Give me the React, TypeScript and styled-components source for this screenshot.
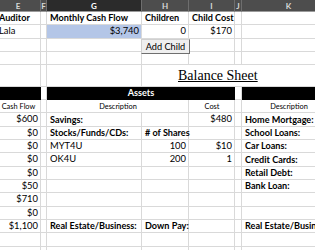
import React from "react";
import styled, { createGlobalStyle } from "styled-components";

const GlobalStyle = createGlobalStyle`
  html, body {
    margin: 0;
    padding: 0;
    background: #ffffff;
    overflow: hidden;
  }
  body {
    font-family: Lato, "Liberation Sans", sans-serif;
  }
`;

type Align = "left" | "right" | "center";

interface CellSpec {
  text?: string;
  bold?: boolean;
  align?: Align;
  small?: boolean;
  span?: number;
  fill?: string;
}

const Viewport = styled.div`
  width: 315px;
  height: 250px;
  overflow: hidden;
`;

const Sheet = styled.div`
  margin-left: -4px;
  width: 340px;
  display: grid;
  grid-template-columns: 45px 6px 95px 47px 46px 7px 94px;
  grid-template-rows: 12px repeat(4, 13.333px) 21.333px repeat(13, 13.333px);
`;

const HeaderCell = styled.div<{ $active?: boolean }>`
  background: ${(p) => (p.$active ? "#2b2b2b" : "#4d4d4d")};
  color: ${(p) => (p.$active ? "#ffffff" : "#d8d8d8")};
  border-right: 1px solid #6e6e6e;
  border-bottom: 1px solid #9a9a9a;
  box-sizing: border-box;
  font-size: 8px;
  font-weight: 700;
  display: flex;
  align-items: center;
  justify-content: center;
`;

const Cell = styled.div<{
  $bold?: boolean;
  $align?: Align;
  $small?: boolean;
  $span?: number;
  $fill?: string;
}>`
  position: relative;
  grid-column: span ${(p) => p.$span ?? 1};
  box-sizing: border-box;
  border-right: 1px solid ${(p) => (p.$fill === "#000000" ? "#000000" : "#d9d9d9")};
  border-bottom: 1px solid ${(p) => (p.$fill === "#000000" ? "#000000" : "#d9d9d9")};
  background: ${(p) => p.$fill ?? "#ffffff"};
  color: ${(p) => (p.$fill === "#000000" ? "#ffffff" : "#000000")};
  font-size: ${(p) => (p.$small ? "7.4px" : p.$bold ? "9.1px" : "9.4px")};
  font-weight: ${(p) => (p.$bold ? 700 : 400)};
  line-height: 1;
  white-space: nowrap;
  display: flex;
  align-items: flex-end;
  justify-content: ${(p) =>
    p.$align === "right" ? "flex-end" : p.$align === "center" ? "center" : "flex-start"};
  padding: 0 2px 2px 3px;
`;

const CellText = styled.span`
  position: relative;
  z-index: 1;
`;

const TitleCell = styled.div`
  grid-column: span 4;
  border-bottom: 1px solid #d9d9d9;
  display: flex;
  align-items: flex-end;
  padding: 0 0 2px 36px;
  font-family: "Liberation Serif", serif;
  font-size: 14px;
  text-decoration: underline;
  text-underline-offset: 1px;
  text-decoration-thickness: 1px;
  color: #000000;
`;

const FormButton = styled.button`
  position: absolute;
  top: 0;
  left: -1px;
  width: 49px;
  height: 15px;
  z-index: 2;
  margin: 0;
  padding: 0;
  box-sizing: border-box;
  background: #efefef;
  border: 1px solid #d0d0d0;
  border-right-color: #6f6f6f;
  border-bottom-color: #6f6f6f;
  font-family: Lato, "Liberation Sans", sans-serif;
  font-size: 9.2px;
  color: #000000;
  line-height: 1;
`;

const BLUE = "#b4c6e7";
const BLACK = "#000000";

const headers = ["E", "F", "G", "H", "I", "J", "K"];

const topRows: CellSpec[][] = [
  [
    { text: "Auditor", bold: true },
    {},
    { text: "Monthly Cash Flow", bold: true },
    { text: "Children", bold: true },
    { text: "Child Cost", bold: true },
    {},
    {},
  ],
  [
    { text: "Lala" },
    {},
    { text: "$3,740", align: "right", fill: BLUE },
    { text: "0", align: "right" },
    { text: "$170", align: "right" },
    {},
    {},
  ],
];

const blank: CellSpec[] = [{}, {}, {}, {}, {}, {}, {}];

const bottomRows: CellSpec[][] = [
  [
    { fill: BLACK },
    {},
    { text: "Assets", bold: true, align: "center", span: 3, fill: BLACK },
    {},
    { fill: BLACK },
  ],
  [
    { text: "Cash Flow", small: true, align: "center" },
    {},
    { text: "Description", small: true, align: "center", span: 2 },
    { text: "Cost", small: true, align: "center" },
    {},
    { text: "Description", small: true, align: "center" },
  ],
  [
    { text: "$600", align: "right" },
    {},
    { text: "Savings:", bold: true },
    {},
    { text: "$480", align: "right" },
    {},
    { text: "Home Mortgage:", bold: true },
  ],
  [
    { text: "$0", align: "right" },
    {},
    { text: "Stocks/Funds/CDs:", bold: true },
    { text: "# of Shares", bold: true },
    {},
    {},
    { text: "School Loans:", bold: true },
  ],
  [
    { text: "$0", align: "right" },
    {},
    { text: "MYT4U" },
    { text: "100", align: "right" },
    { text: "$10", align: "right" },
    {},
    { text: "Car Loans:", bold: true },
  ],
  [
    { text: "$0", align: "right" },
    {},
    { text: "OK4U" },
    { text: "200", align: "right" },
    { text: "1", align: "right" },
    {},
    { text: "Credit Cards:", bold: true },
  ],
  [
    { text: "$0", align: "right" },
    {},
    {},
    {},
    {},
    {},
    { text: "Retail Debt:", bold: true },
  ],
  [
    { text: "$50", align: "right" },
    {},
    {},
    {},
    {},
    {},
    { text: "Bank Loan:", bold: true },
  ],
  [{ text: "$710", align: "right" }, {}, {}, {}, {}, {}, {}],
  [{ text: "$0", align: "right" }, {}, {}, {}, {}, {}, {}],
  [
    { text: "$1,100", align: "right" },
    {},
    { text: "Real Estate/Business:", bold: true },
    { text: "Down Pay:", bold: true },
    {},
    {},
    { text: "Real Estate/Business:", bold: true },
  ],
  blank,
  blank,
];

const renderRow = (row: CellSpec[], r: string) =>
  row.map((c, i) => (
    <Cell
      key={`${r}-${i}`}
      $bold={c.bold}
      $align={c.align}
      $small={c.small}
      $span={c.span}
      $fill={c.fill}
    >
      {c.text && <CellText>{c.text}</CellText>}
    </Cell>
  ));

const App = () => {
  return (
    <>
      <GlobalStyle />
      <Viewport>
        <Sheet>
          {headers.map((h) => (
            <HeaderCell key={h} $active={h === "G"}>
              {h}
            </HeaderCell>
          ))}
          {topRows.map((row, r) => renderRow(row, `t${r}`))}
          <Cell />
          <Cell />
          <Cell />
          <Cell>
            <FormButton>Add Child</FormButton>
          </Cell>
          <Cell />
          <Cell />
          <Cell />
          {renderRow(blank, "b4")}
          <Cell />
          <Cell />
          <Cell />
          <TitleCell>Balance Sheet</TitleCell>
          {bottomRows.map((row, r) => renderRow(row, `b${r}`))}
        </Sheet>
      </Viewport>
    </>
  );
};

export default App;
